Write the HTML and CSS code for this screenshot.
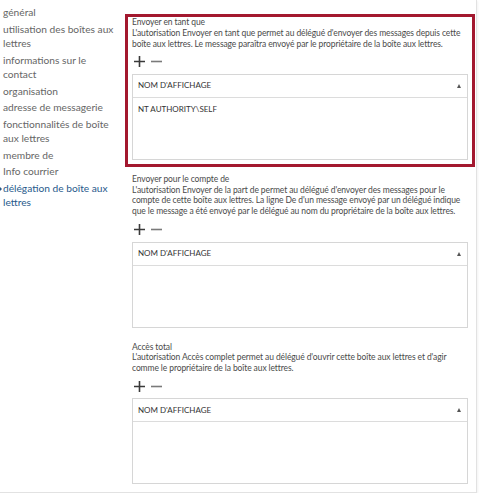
FILE: index.html
```html
<!DOCTYPE html>
<html lang="fr">
<head>
    <meta charset="UTF-8">
    <meta name="viewport" content="width=device-width, initial-scale=1.0">
    <title>Délégation de boîte aux lettres</title>
    <link rel="stylesheet" href="styles.css">
</head>
<body>
    <div class="panel">
        <ul class="nav">
            <li>général</li>
            <li>utilisation des boîtes aux lettres</li>
            <li>informations sur le contact</li>
            <li>organisation</li>
            <li>adresse de messagerie</li>
            <li>fonctionnalités de boîte aux lettres</li>
            <li>membre de</li>
            <li>Info courrier</li>
            <li class="active">délégation de boîte aux lettres</li>
        </ul>

        <div class="content">
            <section class="perm highlight">
                <div class="perm-title">Envoyer en tant que</div>
                <p class="perm-desc">L'autorisation Envoyer en tant que permet au délégué d'envoyer des messages depuis cette boîte aux lettres. Le message paraîtra envoyé par le propriétaire de la boîte aux lettres.</p>
                <div class="toolbar">
                    <svg class="btn-add" width="11" height="11" viewBox="0 0 11 11"><path d="M5.5 0v11M0 5.5h11"/></svg>
                    <svg class="btn-remove" width="11" height="11" viewBox="0 0 11 11"><path d="M0 5.5h11"/></svg>
                </div>
                <div class="grid">
                    <div class="grid-head"><span>NOM D'AFFICHAGE</span><span class="sort"></span></div>
                    <div class="grid-body">
                        <div class="grid-row">NT AUTHORITY\SELF</div>
                    </div>
                </div>
            </section>

            <section class="perm">
                <div class="perm-title">Envoyer pour le compte de</div>
                <p class="perm-desc">L'autorisation Envoyer de la part de permet au délégué d'envoyer des messages pour le compte de cette boîte aux lettres. La ligne De d'un message envoyé par un délégué indique que le message a été envoyé par le délégué au nom du propriétaire de la boîte aux lettres.</p>
                <div class="toolbar">
                    <svg class="btn-add" width="11" height="11" viewBox="0 0 11 11"><path d="M5.5 0v11M0 5.5h11"/></svg>
                    <svg class="btn-remove" width="11" height="11" viewBox="0 0 11 11"><path d="M0 5.5h11"/></svg>
                </div>
                <div class="grid">
                    <div class="grid-head"><span>NOM D'AFFICHAGE</span><span class="sort"></span></div>
                    <div class="grid-body"></div>
                </div>
            </section>

            <section class="perm">
                <div class="perm-title">Accès total</div>
                <p class="perm-desc">L'autorisation Accès complet permet au délégué d'ouvrir cette boîte aux lettres et d'agir comme le propriétaire de la boîte aux lettres.</p>
                <div class="toolbar">
                    <svg class="btn-add" width="11" height="11" viewBox="0 0 11 11"><path d="M5.5 0v11M0 5.5h11"/></svg>
                    <svg class="btn-remove" width="11" height="11" viewBox="0 0 11 11"><path d="M0 5.5h11"/></svg>
                </div>
                <div class="grid">
                    <div class="grid-head"><span>NOM D'AFFICHAGE</span><span class="sort"></span></div>
                    <div class="grid-body"></div>
                </div>
            </section>
        </div>
    </div>
</body>
</html>
```

FILE: styles.css
```css
* {
    margin: 0;
    padding: 0;
    box-sizing: border-box;
}

body {
    font-family: Lato, 'Open Sans', Arial, sans-serif;
    background: white;
    color: #444;
}

.panel {
    display: flex;
    width: 477px;
    height: 493px;
    border-right: 1px solid #e2e2e2;
    border-bottom: 1px solid #e2e2e2;
    box-shadow: 1px 1px 2px rgba(0,0,0,0.05);
}

/* menu de gauche */
.nav {
    list-style: none;
    width: 125px;
    padding: 5px 9px 0 3px;
    font-size: 10.2px;
    line-height: 14.5px;
    color: #666;
}

.nav li {
    margin-bottom: 2px;
    position: relative;
}

.nav li.active {
    color: #285a8c;
}

.nav li.active::before {
    content: '';
    position: absolute;
    left: -4px;
    top: 5px;
    border-left: 3px solid #285a8c;
    border-top: 3px solid transparent;
    border-bottom: 3px solid transparent;
}

/* sections d'autorisation */
.content {
    flex: 1;
    padding: 14px 1px 0 0;
    display: flex;
    flex-direction: column;
    gap: 4px;
}

.perm {
    border: 3px solid transparent;
    padding: 0 4px 4px;
    font-size: 8.5px;
    line-height: 10.8px;
    letter-spacing: -0.1px;
    color: #4a4a4a;
}

.perm.highlight {
    border-color: #a3182f;
}

.toolbar {
    height: 24.5px;
    display: flex;
    align-items: center;
    gap: 6px;
    padding-left: 2px;
}

.toolbar svg {
    fill: none;
    stroke-width: 1.6;
}

.btn-add {
    stroke: #3a3a3a;
}

.btn-remove {
    stroke: #7a7a7a;
}

.grid {
    border: 1px solid #d6d6d6;
    letter-spacing: 0;
}

.grid-head {
    height: 23px;
    border-bottom: 1px solid #dcdcdc;
    display: flex;
    align-items: center;
    justify-content: space-between;
    padding: 0 5px;
    font-size: 8px;
    color: #333;
}

.sort {
    border-bottom: 4px solid #555;
    border-left: 2.5px solid transparent;
    border-right: 2.5px solid transparent;
    margin-right: 1px;
}

.grid-body {
    height: 61px;
}

.grid-row {
    height: 22px;
    line-height: 22px;
    padding-left: 5px;
    font-size: 8px;
    color: #333;
}
```
